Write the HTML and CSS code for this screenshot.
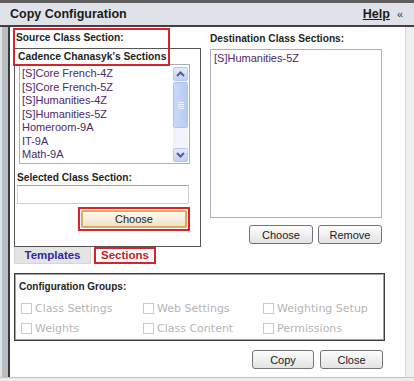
FILE: index.html
```html
<!DOCTYPE html>
<html lang="en">
<head>
  <meta charset="UTF-8">
  <title>Copy Configuration</title>
  <link rel="stylesheet" href="styles.css">
</head>
<body>
  <div class="window">
    <div class="titlebar">
      <span class="title">Copy Configuration</span>
      <a class="help" href="#">Help</a>
      <span class="collapse">&laquo;</span>
    </div>

    <div class="frame">
      <div class="frame-left"></div>
      <div class="content">
        <div class="columns">
          <!-- source side -->
          <div class="source-col">
            <div class="mark mark-source"></div>
            <div class="label legend">Source Class Section:</div>
            <div class="source-box">
              <div class="label owner">Cadence Chanasyk's Sections</div>
              <div class="listbox source-list">
                <ul class="items">
                  <li>[S]Core French-4Z</li>
                  <li>[S]Core French-5Z</li>
                  <li>[S]Humanities-4Z</li>
                  <li>[S]Humanities-5Z</li>
                  <li>Homeroom-9A</li>
                  <li>IT-9A</li>
                  <li>Math-9A</li>
                </ul>
                <div class="scrollbar">
                  <div class="sb-btn">
                    <svg width="9" height="6" viewBox="0 0 9 6"><path d="M1 5 L4.5 1.5 L8 5" fill="none" stroke="#4d6185" stroke-width="2"/></svg>
                  </div>
                  <div class="sb-thumb"><span></span><span></span><span></span><span></span></div>
                  <div class="sb-track"></div>
                  <div class="sb-btn">
                    <svg width="9" height="6" viewBox="0 0 9 6"><path d="M1 1 L4.5 4.5 L8 1" fill="none" stroke="#4d6185" stroke-width="2"/></svg>
                  </div>
                </div>
              </div>
              <div class="label field-label">Selected Class Section:</div>
              <div class="textbox"></div>
              <div class="choose-row">
                <span class="mark-button"><button class="btn btn-gold">Choose</button></span>
              </div>
            </div>
            <div class="tabs">
              <span class="tab">Templates</span>
              <span class="tab tab-active">Sections</span>
            </div>
          </div>

          <!-- destination side -->
          <div class="dest-col">
            <div class="label dest-label">Destination Class Sections:</div>
            <div class="listbox dest-list">
              <ul class="items">
                <li>[S]Humanities-5Z</li>
              </ul>
            </div>
            <div class="btn-row">
              <button class="btn">Choose</button>
              <button class="btn">Remove</button>
            </div>
          </div>
        </div>

        <div class="groups">
          <div class="groups-title">Configuration Groups:</div>
          <div class="checks">
            <label class="check"><span class="box"></span>Class Settings</label>
            <label class="check"><span class="box"></span>Web Settings</label>
            <label class="check"><span class="box"></span>Weighting Setup</label>
            <label class="check"><span class="box"></span>Weights</label>
            <label class="check"><span class="box"></span>Class Content</label>
            <label class="check"><span class="box"></span>Permissions</label>
          </div>
        </div>

        <div class="actions">
          <button class="btn btn-copy">Copy</button>
          <button class="btn btn-close">Close</button>
        </div>
      </div>
      <div class="frame-right"></div>
    </div>
    <div class="window-bottom"></div>
  </div>
</body>
</html>
```

FILE: styles.css
```css
* {
  box-sizing: border-box;
}

body {
  margin: 0;
  font-family: "Liberation Sans", Arial, sans-serif;
  font-size: 12px;
  color: #222;
  background: #fff;
}

.window {
  width: 414px;
  height: 381px;
  display: flex;
  flex-direction: column;
  background: #eeeeee;
  border-top: 3px solid #5e5e5e;
}

.titlebar {
  height: 24px;
  display: flex;
  align-items: center;
  padding: 0 11px 0 10px;
  background: #dfe3e9;
  border-bottom: 2px solid #404040;
}

.title {
  font-weight: bold;
  font-size: 12.5px;
  color: #1a1a1a;
  flex: 1;
}

.help {
  font-weight: bold;
  font-size: 12.5px;
  color: #1a1a1a;
  text-decoration: underline;
}

.collapse {
  margin-left: 7px;
  font-size: 11px;
  color: #333;
}

.frame {
  height: 350px;
  display: flex;
}

.frame-left {
  width: 10px;
  background: linear-gradient(to right, #e2e2e2 0 2px, #b8bdc2 2px 8px, #3a3a3a 8px 10px);
}

.content {
  width: 395px;
  background: #fff;
}

.frame-right {
  width: 9px;
  background: #efefef;
  border-left: 1px solid #d6d6d6;
}

.window-bottom {
  height: 4px;
  background: #ececec;
  border-top: 1px solid #c4c4c4;
}

.label {
  font-weight: bold;
  font-size: 10.2px;
  line-height: 14px;
  color: #1f1f1f;
}

.columns {
  display: flex;
}

/* source */
.source-col {
  position: relative;
  width: 187px;
  margin-left: 4px;
}

.mark {
  position: absolute;
  border: 2px solid #d8232a;
}

.mark-source {
  left: -1px;
  top: 1px;
  width: 157px;
  height: 38px;
}

.legend {
  margin-top: 4px;
  padding-left: 2px;
}

.source-box {
  margin-top: 3px;
  height: 199px;
  border: 1px solid #555;
}

.owner {
  font-size: 10.3px;
  padding: 1px 0 0 3px;
  line-height: 13px;
}

.listbox {
  border: 1px solid #a9b2bc;
  background: #fff;
}

.source-list {
  display: flex;
  margin: 1px 0 0 4px;
  width: 171px;
  height: 100px;
  padding: 2px 1px 1px 2px;
}

.items {
  list-style: none;
  margin: 0;
  padding: 0;
  flex: 1;
  font-size: 11px;
  line-height: 13.5px;
  color: #4e2966;
}

.scrollbar {
  width: 15px;
  display: flex;
  flex-direction: column;
  background: #f2f4fa;
}

.sb-btn {
  height: 14px;
  display: flex;
  align-items: center;
  justify-content: center;
  background: linear-gradient(#e2eafd, #c0cff6);
  border: 1px solid #b9c8ef;
  border-radius: 2px;
}

.sb-thumb {
  height: 46px;
  margin-top: 1px;
  display: flex;
  flex-direction: column;
  align-items: center;
  justify-content: center;
  gap: 1px;
  background: linear-gradient(to right, #cbd8fb, #b8c9f5);
  border: 1px solid #b2c2ee;
  border-radius: 2px;
}

.sb-thumb span {
  width: 6px;
  height: 1px;
  background: #eef2fd;
}

.sb-track {
  flex: 1;
}

.field-label {
  margin-top: 7px;
  padding-left: 2px;
}

.textbox {
  margin-left: 2px;
  width: 172px;
  height: 19px;
  border: 1px solid #c9d0d8;
  border-top-color: #9aa3ad;
}

.choose-row {
  margin: 3px 0 0 63px;
}

.mark-button {
  display: inline-block;
  width: 112px;
  height: 24px;
  padding: 1px;
  border: 2px solid #d8232a;
}

.btn {
  height: 19px;
  padding: 0;
  font-family: "Liberation Sans", Arial, sans-serif;
  font-size: 11px;
  color: #222;
  background: linear-gradient(#fdfdfd, #e3e3e3);
  border: 1px solid #6f747a;
  border-radius: 3px;
}

.btn-gold {
  width: 106px;
  height: 18px;
  border: 2px solid #dba962;
  border-radius: 2px;
  background: linear-gradient(#fffaf0, #efe2c6);
}

.tabs {
  display: flex;
  gap: 3px;
}

.tab {
  height: 17px;
  line-height: 16px;
  text-align: center;
  font-weight: bold;
  font-size: 11.5px;
}

.tab:first-child {
  width: 77px;
  color: #2a2aa6;
  background: #e4e4e4;
  border: 1px solid #d6d6d6;
  border-top: 0;
}

.tab-active {
  width: 62px;
  color: #c31a2c;
  background: #fff;
  border: 2px solid #d8232a;
  line-height: 13px;
}

/* destination */
.dest-col {
  width: 172px;
  margin-left: 9px;
}

.dest-label {
  margin-top: 5px;
}

.dest-list {
  margin-top: 3px;
  height: 169px;
  padding: 2px 3px;
}

.btn-row {
  display: flex;
  justify-content: flex-end;
  gap: 5px;
  margin-top: 7px;
}

.btn-row .btn {
  width: 64px;
}

/* groups */
.groups {
  margin: 9px 0 0 4px;
  width: 371px;
  height: 68px;
  border: 1px solid #3c3c3c;
  box-shadow: inset 0 0 0 1px #a4a4a4;
  padding: 6px 0 0 4px;
}

.groups-title {
  font-weight: bold;
  font-size: 10px;
  line-height: 14px;
  color: #1f1f1f;
}

.checks {
  display: grid;
  grid-template-columns: 122px 120px 110px;
  row-gap: 7px;
  margin-top: 8px;
  padding-left: 2px;
}

.check {
  display: flex;
  align-items: center;
  gap: 3px;
  font-family: "DejaVu Sans", Verdana, sans-serif;
  font-size: 11px;
  line-height: 13px;
  color: #b5b5b5;
}

.box {
  width: 11px;
  height: 11px;
  border: 1px solid #cacaca;
  background: #fff;
}

.actions {
  display: flex;
  justify-content: flex-end;
  gap: 6px;
  margin: 9px 22px 0 0;
}

.btn-copy {
  width: 62px;
}

.btn-close {
  width: 63px;
}
```
